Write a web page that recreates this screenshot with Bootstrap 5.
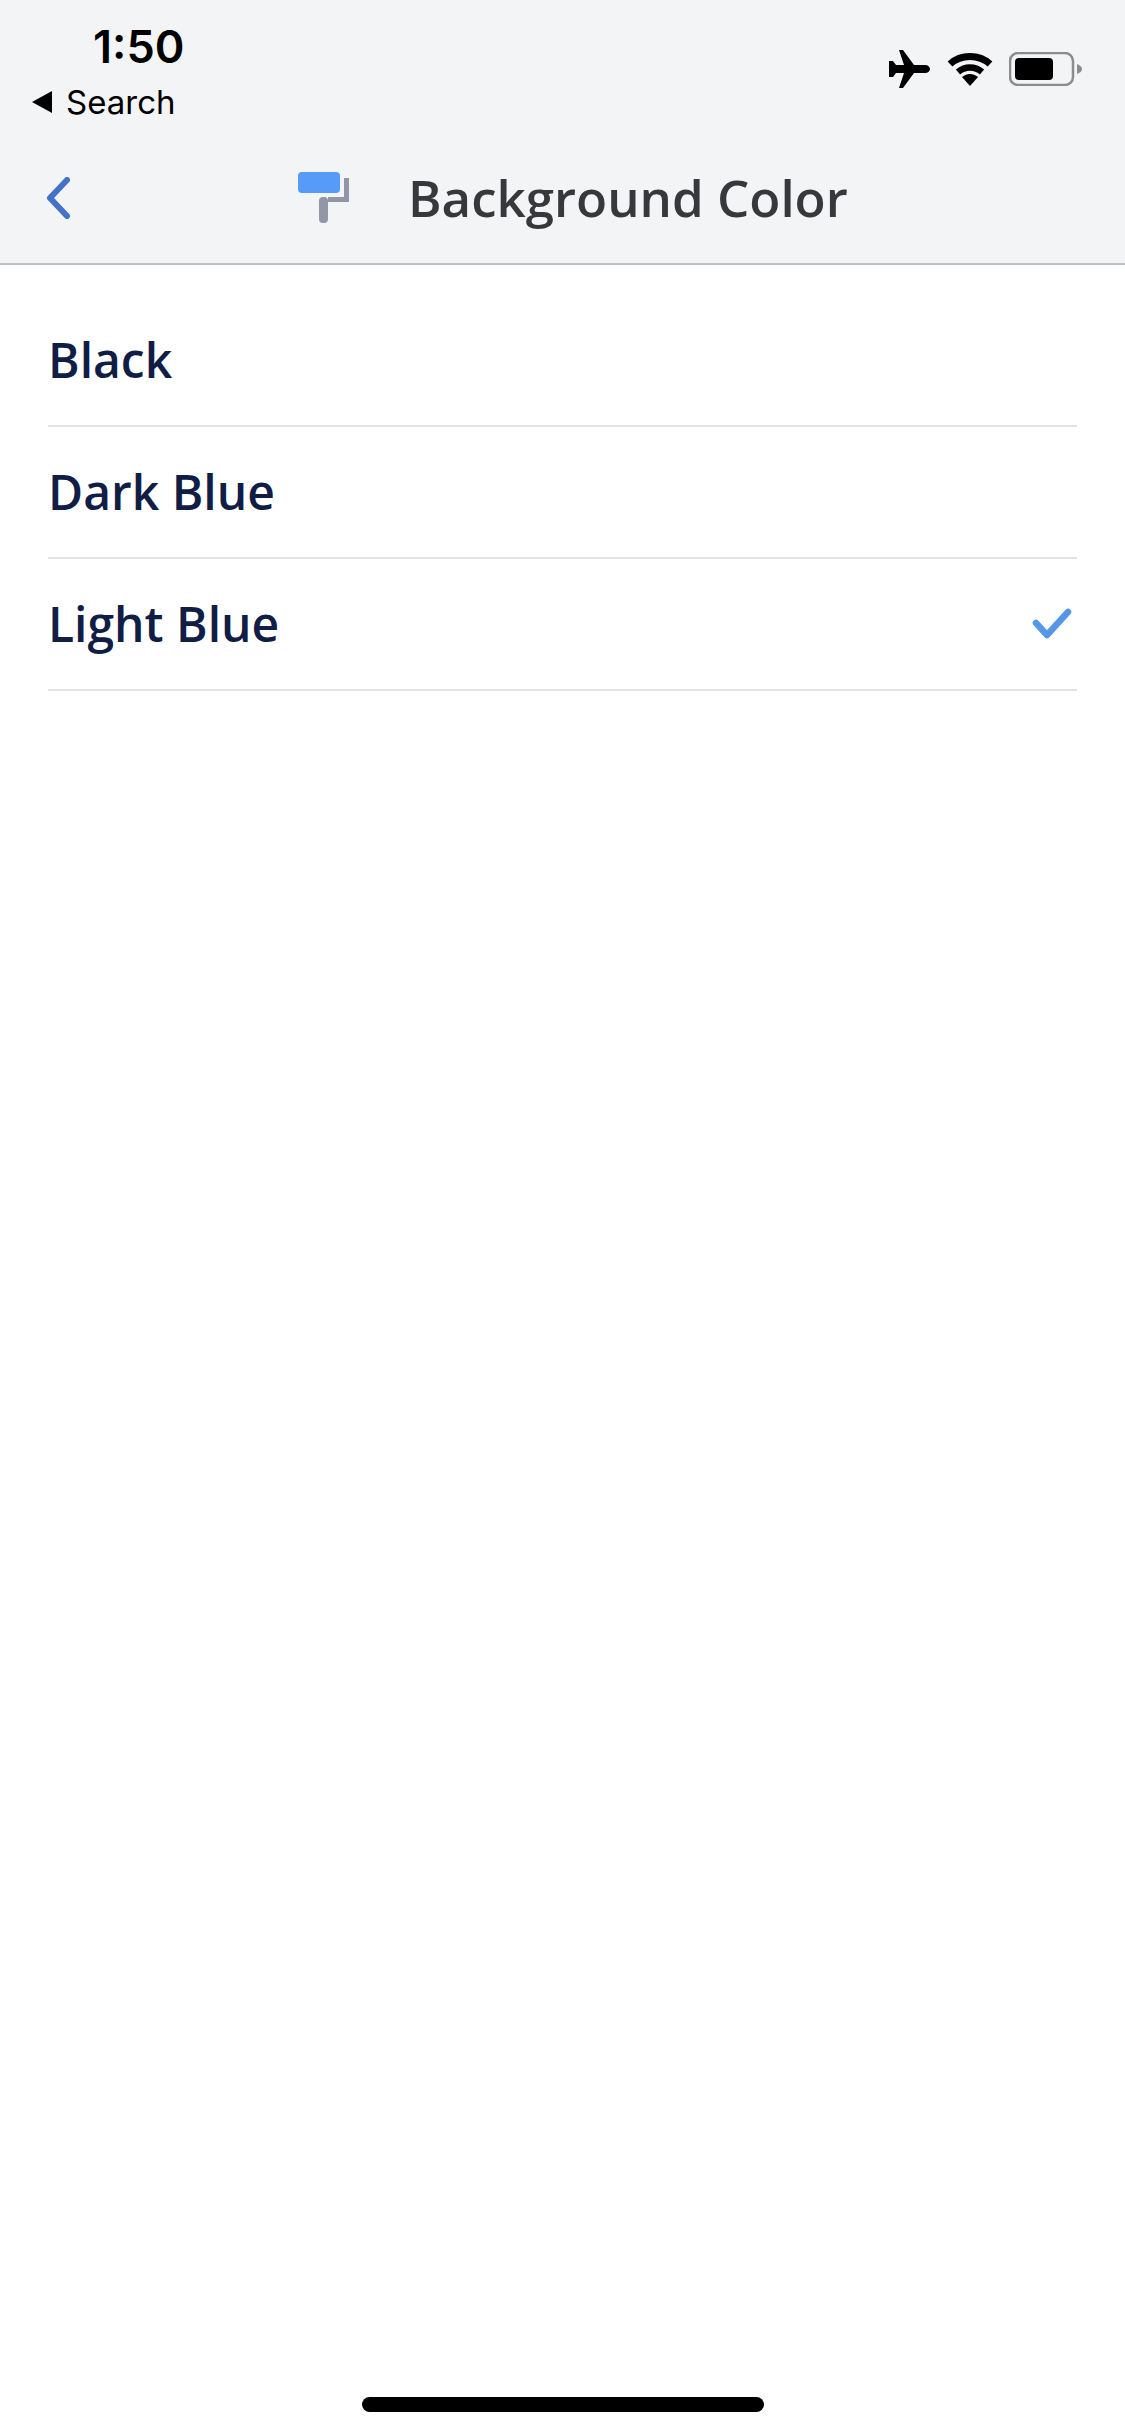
<!DOCTYPE html>
<html lang="en">
<head>
  <meta charset="UTF-8">
  <meta name="viewport" content="width=device-width, initial-scale=1.0">
  <title>Background Color</title>
  <link href="https://cdn.jsdelivr.net/npm/bootstrap@5.3.0/dist/css/bootstrap.min.css" rel="stylesheet">
  <style>
    body {
      background-color: #fff;
      font-family: "Open Sans", sans-serif;
    }
    .screen {
      min-height: 2436px;
    }
    .top-area {
      background-color: #f3f4f6;
      border-bottom: 2px solid #c0c1c3;
      height: 265px;
    }
    .status-bar {
      height: 134px;
      padding: 22px 43px 0 31px;
      font-family: Inter, sans-serif;
      color: #000;
    }
    .status-time {
      font-size: 45px;
      font-weight: 600;
      line-height: 50px;
      padding-left: 62px;
    }
    .status-back {
      font-size: 33px;
      font-weight: 400;
      line-height: 40px;
      margin-top: 10px;
      gap: 13px;
    }
    .status-icons {
      gap: 16px;
      padding-top: 28px;
    }
    .nav-row {
      height: 127px;
      padding-left: 45px;
    }
    .nav-back {
      width: 253px;
    }
    .nav-title {
      font-size: 51px;
      font-weight: 600;
      color: #36383c;
      margin-left: 58px;
      line-height: 1;
    }
    .option-list {
      padding: 30px 48px 0 48px;
    }
    .option-row {
      height: 132px;
      border-bottom: 2px solid #e2e3e5;
      color: #101d45;
      font-size: 48px;
      font-weight: 600;
    }
    .home-bar {
      width: 402px;
      height: 15px;
      background-color: #000;
      border-radius: 8px;
      margin-bottom: 24px;
    }
  </style>
</head>
<body>
  <div class="screen d-flex flex-column">
    <div class="top-area">
      <div class="status-bar d-flex justify-content-between align-items-start">
        <div>
          <div class="status-time">1:50</div>
          <div class="status-back d-flex align-items-center">
            <svg width="22" height="24" viewBox="0 0 22 24"><path d="M1 12 21 1V23Z" fill="#000"/></svg>
            <span>Search</span>
          </div>
        </div>
        <div class="status-icons d-flex align-items-center">
          <svg width="42" height="38" viewBox="0 0 42 38"><path d="M10 0h4l11 15h11c3 0 5 2 5 4s-2 4-5 4H25L14 38h-4l5-15H7l-3 4H0V11h4l3 4h8Z" fill="#000"/></svg>
          <svg width="46" height="34" viewBox="0 0 46 34" fill="none"><path d="M3 12C14 2 32 2 43 12" stroke="#000" stroke-width="7"/><path d="M11 20C18 14 28 14 35 20" stroke="#000" stroke-width="6.5"/><path d="M15 25C20 21 26 21 31 25L23 34Z" fill="#000"/></svg>
          <svg width="73" height="34" viewBox="0 0 73 34"><rect x="1" y="1" width="63" height="32" rx="8" fill="none" stroke="#8c8c8c" stroke-width="2.5"/><rect x="6" y="6" width="38" height="22" rx="4" fill="#000"/><path d="M68 12c3 1 5 3 5 5s-2 4-5 5Z" fill="#8c8c8c"/></svg>
        </div>
      </div>
      <div class="nav-row d-flex align-items-center">
        <div class="nav-back d-flex align-items-center">
          <svg width="26" height="42" viewBox="0 0 26 42" fill="none"><path d="M22 3 5 21 22 39" stroke="#4472c9" stroke-width="6" stroke-linecap="round" stroke-linejoin="round"/></svg>
        </div>
        <svg width="52" height="52" viewBox="0 0 52 52"><rect y="0" width="42" height="21" rx="4" fill="#559bf7"/><path d="M46 6h5v24H30v-5h16Z" fill="#9396a6"/><rect x="21" y="25" width="9" height="26" rx="4" fill="#9396a6"/></svg>
        <div class="nav-title">Background Color</div>
      </div>
    </div>

    <div class="option-list">
      <div class="option-row d-flex align-items-center justify-content-between">Black</div>
      <div class="option-row d-flex align-items-center justify-content-between">Dark Blue</div>
      <div class="option-row d-flex align-items-center justify-content-between">
        <span>Light Blue</span>
        <svg class="me-1" width="42" height="34" viewBox="0 0 42 34" fill="none"><path d="M5 16 16 28 37 5" stroke="#5596e6" stroke-width="6.5" stroke-linecap="round" stroke-linejoin="round"/></svg>
      </div>
    </div>

    <div class="mt-auto d-flex justify-content-center">
      <div class="home-bar"></div>
    </div>
  </div>

  <script src="https://cdn.jsdelivr.net/npm/bootstrap@5.3.0/dist/js/bootstrap.bundle.min.js"></script>
</body>
</html>
